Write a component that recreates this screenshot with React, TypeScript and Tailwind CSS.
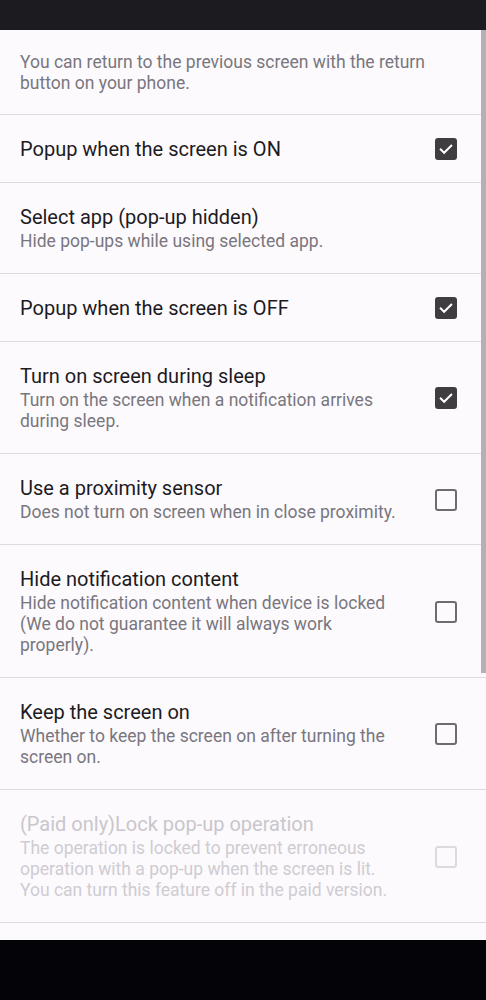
import React from "react";

type Pref = {
  title: string;
  summary?: string;
  checked: boolean;
  disabled?: boolean;
};

const PREFS: Pref[] = [
  { title: "Popup when the screen is ON", checked: true },
  {
    title: "Select app (pop-up hidden)",
    summary: "Hide pop-ups while using selected app.",
    checked: false,
  },
  { title: "Popup when the screen is OFF", checked: true },
  {
    title: "Turn on screen during sleep",
    summary: "Turn on the screen when a notification arrives during sleep.",
    checked: true,
  },
  {
    title: "Use a proximity sensor",
    summary: "Does not turn on screen when in close proximity.",
    checked: false,
  },
  {
    title: "Hide notification content",
    summary:
      "Hide notification content when device is locked (We do not guarantee it will always work properly).",
    checked: false,
  },
  {
    title: "Keep the screen on",
    summary: "Whether to keep the screen on after turning the screen on.",
    checked: false,
  },
  {
    title: "(Paid only)Lock pop-up operation",
    summary:
      "The operation is locked to prevent erroneous operation with a pop-up when the screen is lit. You can turn this feature off in the paid version.",
    checked: false,
    disabled: true,
  },
];

const NO_BOX = ["Select app (pop-up hidden)"];

function Checkbox({ checked, disabled }: { checked: boolean; disabled?: boolean }) {
  if (checked) {
    return (
      <div className="w-[22px] h-[22px] shrink-0 rounded-[3px] bg-[#3f3d42] flex items-center justify-center">
        <svg viewBox="0 0 24 24" className="w-[18px] h-[18px]" fill="none">
          <path
            d="M5 12.5l4.5 4.5L19 7.5"
            stroke="#ffffff"
            strokeWidth="2.6"
            strokeLinecap="square"
          />
        </svg>
      </div>
    );
  }
  return (
    <div
      className={`w-[22px] h-[22px] shrink-0 rounded-[3px] border-2 ${
        disabled ? "border-[#dcdadf]" : "border-[#6e6c71]"
      }`}
    />
  );
}

export default function App() {
  return (
    <div className="w-[486px] h-[1000px] flex flex-col bg-[#fcfafd] font-['Roboto',sans-serif] overflow-hidden">
      {/* status bar */}
      <div className="h-[30px] shrink-0 bg-[#1c1b1f]" />

      <div className="relative flex-1 overflow-hidden">
        <div className="pl-5 pr-[50px] pt-[22px] pb-[20px] text-[17.5px] leading-[21px] text-[#79767d] border-b border-[#dedbe0]">
          You can return to the previous screen with the return button on your phone.
        </div>

        {PREFS.map((p) => {
          const hasBox = !NO_BOX.includes(p.title);
          return (
            <div
              key={p.title}
              className="flex items-center pl-5 pr-[29px] pt-[22px] pb-[21px] border-b border-[#dedbe0]"
            >
              <div className="flex-1 min-w-0 pr-[30px]">
                <p
                  className={`text-[20px] leading-[24px] ${
                    p.disabled ? "text-[#c9c6cc]" : "text-[#1c1b1f]"
                  }`}
                >
                  {p.title}
                </p>
                {p.summary && (
                  <p
                    className={`mt-[2px] text-[17.5px] leading-[21px] ${
                      p.disabled ? "text-[#cfccd2]" : "text-[#79767d]"
                    }`}
                  >
                    {p.summary}
                  </p>
                )}
              </div>
              {hasBox ? (
                <Checkbox checked={p.checked} disabled={p.disabled} />
              ) : (
                <div className="w-[22px] h-[22px] shrink-0" />
              )}
            </div>
          );
        })}

        {/* scrollbar thumb */}
        <div className="absolute right-0 top-0 w-[5px] h-[643px] bg-[#b3b1b5]" />
      </div>

      {/* navigation bar */}
      <div className="h-[60px] shrink-0 bg-[#040308]" />
    </div>
  );
}
